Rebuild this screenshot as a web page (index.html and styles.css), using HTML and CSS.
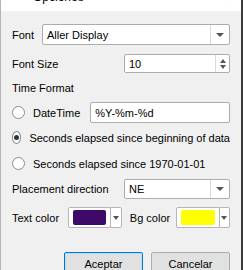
FILE: index.html
```html
<!DOCTYPE html>
<html lang="es">
<head>
    <meta charset="UTF-8">
    <title>Opciones</title>
    <link rel="stylesheet" href="styles.css">
</head>
<body>
    <div class="window">
        <!-- Barra de titulo (recortada arriba) -->
        <div class="titlebar">
            <div class="title-inner">
                <svg class="app-icon" width="12" height="12" viewBox="0 0 12 12">
                    <path d="M1 3 Q6 10 11 4" stroke="#3f9a2f" stroke-width="3" fill="none"/>
                </svg>
                <span class="title-text">Opciones</span>
                <span class="close">&#x2715;</span>
            </div>
        </div>

        <div class="content">
            <div class="row row-font">
                <label class="lbl">Font</label>
                <div class="combo combo-font">
                    <span class="combo-text">Aller Display</span>
                    <span class="combo-arrow"><i class="tri-down"></i></span>
                </div>
            </div>

            <div class="row row-size">
                <label class="lbl">Font Size</label>
                <div class="spin">
                    <span class="combo-text">10</span>
                    <span class="spin-arrows"><i class="tri-up"></i><i class="tri-down"></i></span>
                </div>
            </div>

            <div class="group-label">Time Format</div>

            <div class="row row-datetime">
                <label class="radio"><span class="circle"></span>DateTime</label>
                <div class="textfield">%Y-%m-%d</div>
            </div>

            <label class="radio radio-line"><span class="circle checked"></span>Seconds elapsed since beginning of data</label>
            <label class="radio radio-line"><span class="circle"></span>Seconds elapsed since 1970-01-01</label>

            <div class="row row-place">
                <label class="lbl">Placement direction</label>
                <div class="combo combo-place">
                    <span class="combo-text">NE</span>
                    <span class="combo-arrow"><i class="tri-down"></i></span>
                </div>
            </div>

            <div class="row row-colors">
                <label class="lbl">Text color</label>
                <div class="colorbtn"><span class="swatch" style="background:#3d0a68"></span></div>
                <div class="colordrop"><i class="tri-down"></i></div>
                <label class="lbl lbl-bg">Bg color</label>
                <div class="colorbtn"><span class="swatch" style="background:#ffff00"></span></div>
                <div class="colordrop"><i class="tri-down"></i></div>
            </div>

            <div class="buttons">
                <button class="btn btn-default">Aceptar</button>
                <button class="btn">Cancelar</button>
            </div>
        </div>
    </div>
</body>
</html>
```

FILE: styles.css
```css
/* Estilos generales */
* {
    box-sizing: border-box;
    margin: 0;
    padding: 0;
}

body {
    font-family: "Liberation Sans", Arial, sans-serif;
    font-size: 11px;
    color: #000;
    background: #f0f0f0;
    overflow: hidden;
}

.window {
    width: 243px;
    height: 270px;
    background: #f0f0f0;
    border-left: 1px solid #b4b4b4;
    border-right: 2px solid #3c3c3c;
}

/* Barra de titulo */
.titlebar {
    height: 11px;
    background: #fff;
    overflow: hidden;
}

.title-inner {
    display: flex;
    align-items: center;
    height: 16px;
    margin-top: -11px;
    padding: 0 10px 0 9px;
}

.app-icon {
    margin-right: 11px;
}

.title-text {
    flex: 1;
    font-size: 12px;
}

.close {
    font-size: 11px;
    color: #333;
}

/* Contenido */
.content {
    padding: 13px 11px 0 11px;
}

.row {
    display: flex;
    align-items: center;
}

.lbl {
    white-space: nowrap;
}

.combo, .spin, .textfield {
    height: 21px;
    background: #fff;
    border: 1px solid #acacac;
    border-radius: 2px;
    display: flex;
    align-items: center;
}

.combo-text {
    flex: 1;
    padding-left: 4px;
}

.combo-font {
    flex: 1;
    margin-left: 8px;
}

.combo-arrow {
    width: 19px;
    height: 100%;
    border-left: 1px solid #d9d9d9;
    display: flex;
    align-items: center;
    justify-content: center;
}

.tri-down, .tri-up {
    display: block;
    width: 0;
    height: 0;
    border-left: 4px solid transparent;
    border-right: 4px solid transparent;
}

.tri-down {
    border-top: 4px solid #555;
}

.tri-up {
    border-bottom: 4px solid #555;
}

.row-size {
    margin-top: 9px;
    justify-content: space-between;
}

.spin {
    width: 106px;
    height: 19px;
}

.spin-arrows {
    width: 14px;
    height: 100%;
    border-left: 1px solid #d9d9d9;
    display: flex;
    flex-direction: column;
    align-items: center;
    justify-content: center;
    gap: 2px;
}

.spin-arrows .tri-up, .spin-arrows .tri-down {
    border-left-width: 3px;
    border-right-width: 3px;
}

.group-label {
    margin-top: 8px;
    height: 15px;
    line-height: 15px;
}

/* Radios */
.radio {
    display: flex;
    align-items: center;
    white-space: nowrap;
}

.circle {
    width: 13px;
    height: 13px;
    border: 1px solid #8c8c8c;
    border-radius: 50%;
    background: #fff;
    margin-right: 8px;
    display: flex;
    align-items: center;
    justify-content: center;
}

.circle.checked::after {
    content: "";
    width: 5px;
    height: 5px;
    border-radius: 50%;
    background: #333;
}

.row-datetime {
    margin-top: 6px;
}

.textfield {
    flex: 1;
    margin-left: 10px;
    padding-left: 4px;
}

.radio-line {
    height: 15px;
    margin-top: 7px;
}

.radio-line + .radio-line {
    margin-top: 11px;
}

.row-place {
    margin-top: 8px;
    justify-content: space-between;
}

.combo-place {
    width: 106px;
    height: 20px;
}

/* Colores */
.row-colors {
    margin-top: 8px;
}

.colorbtn {
    width: 45px;
    height: 21px;
    margin-left: 9px;
    background: #fff;
    border: 1px solid #b5b5b5;
    border-radius: 2px;
    padding: 2px 4px 2px 4px;
}

.swatch {
    display: block;
    width: 100%;
    height: 100%;
    border-radius: 2px;
}

.colordrop {
    width: 12px;
    height: 21px;
    margin-left: -1px;
    background: #fff;
    border: 1px solid #b5b5b5;
    border-radius: 0 2px 2px 0;
    display: flex;
    align-items: center;
    justify-content: center;
}

.colordrop .tri-down {
    border-left-width: 3px;
    border-right-width: 3px;
}

.lbl-bg {
    margin-left: 8px;
    margin-right: -3px;
}

/* Botones */
.buttons {
    display: flex;
    justify-content: flex-end;
    gap: 8px;
    margin-top: 24px;
}

.btn {
    width: 79px;
    height: 23px;
    font-family: inherit;
    font-size: 11px;
    background: #e1e1e1;
    border: 1px solid #adadad;
    border-radius: 2px;
}

.btn-default {
    border-color: #0078d7;
    box-shadow: inset 0 0 0 1px #b9dcf5;
}
```
